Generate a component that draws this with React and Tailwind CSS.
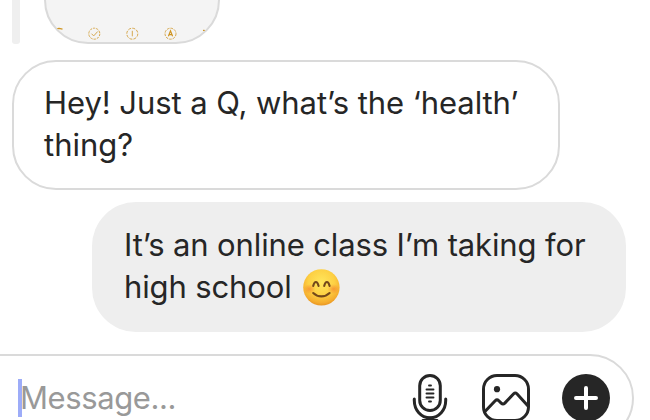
// small outlined badges along the bottom of the shared post
const BadgeRow = () => (
    <svg className="block h-[44px] w-[172px]" viewBox="0 0 172 44" fill="none" stroke="#d6a84e" strokeWidth="1">
        <path d="M10 28.800l3-.4 3.500.8" stroke="#cf9420" strokeWidth="1.200" />
        <circle cx="48.300" cy="33.700" r="5.500" strokeDasharray="2.400 1" />
        <path d="M45.500 33.700l2.200 2.200 4-4.400" />
        <circle cx="86.300" cy="33.700" r="5.500" strokeDasharray="3 1.200" />
        <path d="M86.300 30.800v5.500" />
        <circle cx="124.500" cy="33.700" r="5.500" strokeDasharray="2.600 1" />
        <path d="M122.400 36.300l2.100-5.400 2.100 5.400M123 34.700h3" stroke="#cf9420" strokeWidth="1.200" />
        <path d="M157 30.300l2.600.3" stroke="#cf9420" strokeWidth="1.200" />
    </svg>
)

const SmileEmoji = () => (
    <svg role="img" aria-label="smiling face" className="block h-[37px] w-[37px] shrink-0" viewBox="0 0 37 37" fill="none">
        <defs>
            <radialGradient id="face" cx="50%" cy="36%" r="66%">
                <stop offset="0" stopColor="#ffe65c" />
                <stop offset="0.55" stopColor="#fdd043" />
                <stop offset="0.85" stopColor="#f5ad2e" />
                <stop offset="1" stopColor="#e58f20" />
            </radialGradient>
            <radialGradient id="blush">
                <stop offset="0" stopColor="#f4772c" stopOpacity="0.6" />
                <stop offset="1" stopColor="#f4772c" stopOpacity="0" />
            </radialGradient>
        </defs>
        <circle cx="18.400" cy="18.400" r="18.200" fill="url(#face)" />
        <ellipse cx="6.500" cy="20" rx="6" ry="5" fill="url(#blush)" />
        <ellipse cx="30.500" cy="20" rx="6" ry="5" fill="url(#blush)" />
        <g stroke="#74491a" strokeWidth="2.100" strokeLinecap="round" strokeLinejoin="round">
            <path d="M10.200 17c.6-2.600 1.500-4 2.700-4s2.100 1.400 2.700 4" />
            <path d="M21.200 17c.6-2.600 1.500-4 2.700-4s2.100 1.400 2.700 4" />
            <path d="M10.200 24c4.500 4.500 11.900 4.500 16.400 0" />
        </g>
    </svg>
)

const MicIcon = () => (
    <svg className="block h-[52px] w-[36px] shrink-0" viewBox="0 0 36 52" fill="none" stroke="#262626" strokeWidth="3" strokeLinecap="round">
        <rect x="7.700" y="1.500" width="20.600" height="35" rx="10.300" />
        <path d="M2.300 25v1.500c0 9.500 6.700 17.300 15.700 17.300s15.700-7.800 15.700-17.300V25" />
        <path d="M18 44v6M11 46.500h14" />
        <path d="M17 11.500h2M14.500 15.500h7M14.500 19.500h7M14.500 23.500h7M17 27.500h2" strokeWidth="1.900" />
    </svg>
)

const PhotoIcon = () => (
    <svg className="block h-12 w-12 shrink-0" viewBox="0 0 48 48" fill="none" stroke="#262626" strokeWidth="3" strokeLinejoin="round">
        <rect x="1.500" y="1.500" width="45" height="45" rx="13.500" />
        <circle cx="15" cy="15.200" r="3.100" fill="#262626" stroke="none" />
        <path d="M2.500 38l10.700-11.300q1.800-1.800 3.600 0l2.400 2.400q1.800 1.800 3.600 0l8.900-9.400q1.600-1.600 3.200 0L46 32" />
    </svg>
)

const PlusButton = () => (
    <button aria-label="More" className="block h-12 w-12 shrink-0 rounded-full bg-[#262626]">
        <svg className="block h-12 w-12" viewBox="0 0 48 48" fill="none" stroke="#fff" strokeWidth="4" strokeLinecap="round">
            <path d="M24 14v20M14 24h20" />
        </svg>
    </button>
)

export default function App() {
    return (
        <main className="flex h-[420px] w-[650px] flex-col overflow-hidden bg-white font-['Inter','Liberation_Sans',sans-serif] text-[#262626]">
            {/* tail of the shared post */}
            <div className="flex h-11 shrink-0 items-end pl-3">
                <div className="h-full w-2 rounded-b-[3px] bg-[#efefef]" />
                <div className="ml-6 h-[120px] w-[176px] overflow-hidden rounded-[44px] border-2 border-[#dadada] bg-[#f4f4f4] pt-[74px]">
                    <BadgeRow />
                </div>
            </div>

            <div className="mt-4 ml-3 h-[130px] w-[548px] shrink-0 rounded-[44px] border-2 border-[#dadada] pt-[20px] pl-[30px] text-[31px] leading-[42px]">
                <p className="tracking-[-0.06px] whitespace-nowrap">Hey! Just a Q, what’s the ‘health’</p>
                <p className="whitespace-nowrap">thing?</p>
            </div>

            <div className="mt-3 ml-[92px] h-[130px] w-[534px] shrink-0 rounded-[44px] bg-[#eeeeee] pt-[22px] pl-8 text-[31px] leading-[42px] tracking-[-0.13px]">
                <p className="whitespace-nowrap">It’s an online class I’m taking for</p>
                <p className="flex items-center whitespace-nowrap">
                    <span className="w-[179px]">high school</span>
                    <SmileEmoji />
                </p>
            </div>

            {/* composer */}
            <div className="mt-[22px] -ml-16 flex h-[88px] w-[698px] shrink-0 items-start rounded-[44px] border-2 border-[#dadada] pt-[18px] pl-20">
                <div className="mt-[5px] h-[38px] w-1 bg-[#9dacf8]" />
                <span className="mt-[3px] -ml-[2px] w-[392px] text-[31px] leading-[42px] tracking-[-0.4px] text-[#999999]">Message...</span>
                <MicIcon />
                <div className="ml-[34px] flex gap-8">
                    <PhotoIcon />
                    <PlusButton />
                </div>
            </div>
        </main>
    )
}
